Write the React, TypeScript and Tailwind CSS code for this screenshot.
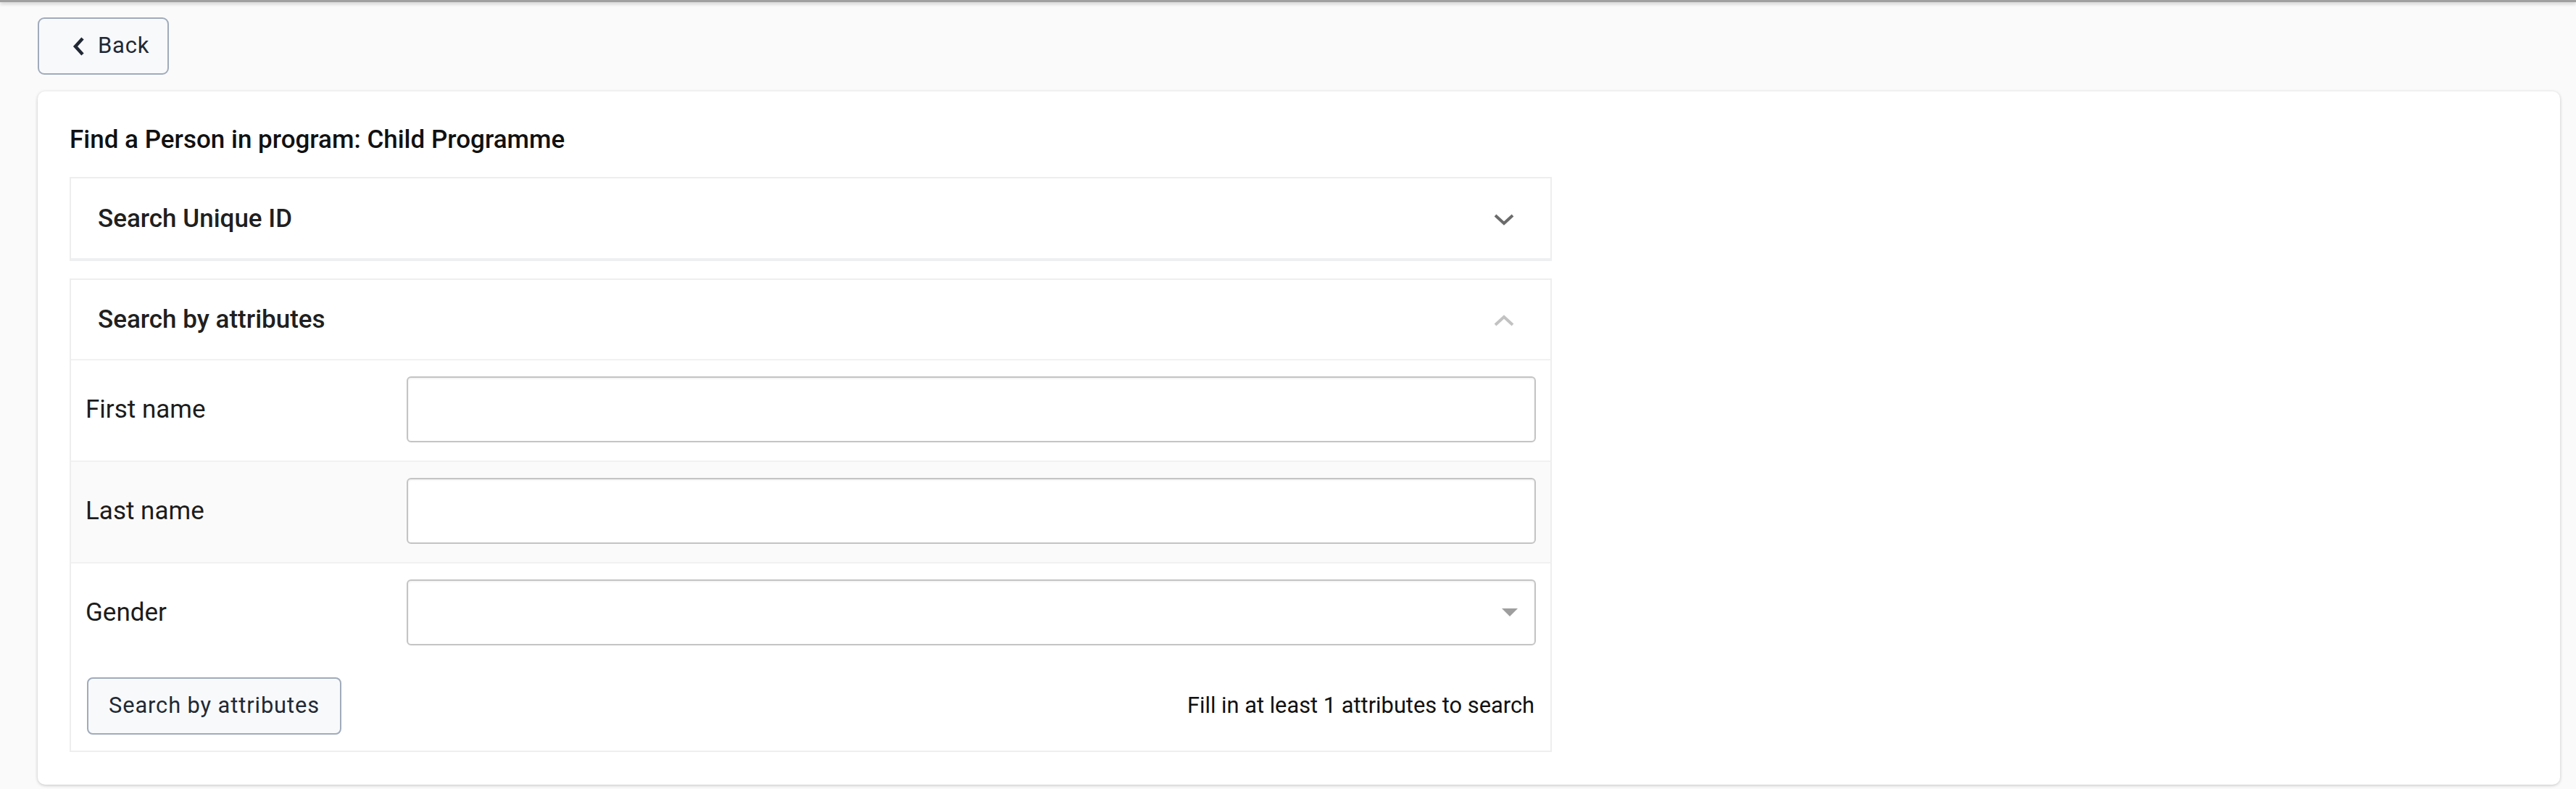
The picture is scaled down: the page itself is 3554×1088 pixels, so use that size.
const font = { fontFamily: "Roboto, 'Liberation Sans', sans-serif" };

// 属性フィールド
const fields = [
  { id: "firstName", label: "First name", type: "text" },
  { id: "lastName", label: "Last name", type: "text" },
  { id: "gender", label: "Gender", type: "select" },
];

function Chevron({ up, color }: { up?: boolean; color: string }) {
  return (
    <svg width="28" height="16" viewBox="0 0 28 16">
      <polyline
        points={up ? "2,14 14,3 26,14" : "2,2 14,13 26,2"}
        fill="none"
        stroke={color}
        strokeWidth="4"
      />
    </svg>
  );
}

function AttributeRow({
  label,
  type,
  striped,
  last,
}: {
  label: string;
  type: string;
  striped: boolean;
  last: boolean;
}) {
  return (
    <div
      className={`flex items-center px-[20px] pt-[22px] pb-[25px] ${
        striped ? "bg-[#fafafa]" : "bg-white"
      } ${last ? "" : "border-b-2 border-[#f1f1f1]"}`}
    >
      <label className="w-[443px] shrink-0 text-[35px] leading-[42px] text-[#1c1c1c]">
        {label}
      </label>
      <div className="relative flex-1 h-[91px] rounded-[6px] border-2 border-[#c4c4c4] bg-white shadow-[inset_0_1px_3px_rgba(0,0,0,0.08)]">
        {type === "select" && (
          <svg
            className="absolute right-[23px] top-[38px]"
            width="22"
            height="11"
            viewBox="0 0 22 11"
          >
            <path d="M0 0 L22 0 L11 11 Z" fill="#9e9e9e" />
          </svg>
        )}
      </div>
    </div>
  );
}

export default function App() {
  return (
    <div className="min-h-[1088px] bg-[#fafafa]" style={font}>
      {/* ヘッダーの影 */}
      <div className="h-[3px] bg-[#a0a0a0] shadow-[0_2px_5px_rgba(0,0,0,0.25)]" />

      <div className="pl-[52px] pr-[22px] pt-[21px]">
        {/* 戻る */}
        <button className="flex items-center h-[79px] w-[181px] pl-[45px] rounded-[9px] border-2 border-[#a0abbb] bg-[#f8f9fb] text-[#212934]">
          <svg width="20" height="26" viewBox="0 0 20 26" className="mr-[16px]">
            <polyline
              points="15,2 5,13 15,24"
              fill="none"
              stroke="#212934"
              strokeWidth="4.5"
            />
          </svg>
          <span className="text-[31px] tracking-[0.8px]">Back</span>
        </button>

        {/* カード */}
        <div className="mt-[23px] h-[956px] rounded-[10px] bg-white px-[44px] pt-[46px] shadow-[0_1px_4px_rgba(0,0,0,0.22)]">
          <h1 className="text-[35px] leading-[42px] font-medium text-[#111]">
            Find a Person in program: Child Programme
          </h1>

          <div className="w-[2045px]">
            {/* Unique ID */}
            <div className="mt-[30px] flex h-[116px] items-center justify-between border-2 border-b-4 border-[#eeeeee] border-b-[#eeeff1] pl-[37px] pr-[50px] pt-[3px]">
              <span className="text-[35px] font-medium text-[#202020]">
                Search Unique ID
              </span>
              <Chevron color="#6b6b6b" />
            </div>

            {/* 属性検索 */}
            <div className="mt-[24px] border-2 border-[#eeeeee]">
              <div className="flex h-[111px] items-center justify-between border-b-2 border-[#f1f1f1] pl-[37px] pr-[50px] pt-[2px]">
                <span className="text-[35px] font-medium text-[#202020]">
                  Search by attributes
                </span>
                <Chevron up color="#c2c2c2" />
              </div>

              {fields.map((f, i) => (
                <AttributeRow
                  key={f.id}
                  label={f.label}
                  type={f.type}
                  striped={i % 2 === 1}
                  last={i === fields.length - 1}
                />
              ))}

              <div className="flex items-center justify-between px-[22px] pt-[19px] pb-[22px]">
                <button className="h-[79px] w-[351px] rounded-[8px] border-2 border-[#a0abbb] bg-[#f8f9fb] text-[30.8px] tracking-[0.9px] text-[#212934]">
                  Search by attributes
                </button>
                <span className="text-[30.8px] text-[#111]">
                  Fill in at least 1 attributes to search
                </span>
              </div>
            </div>
          </div>
        </div>
      </div>
    </div>
  );
}
